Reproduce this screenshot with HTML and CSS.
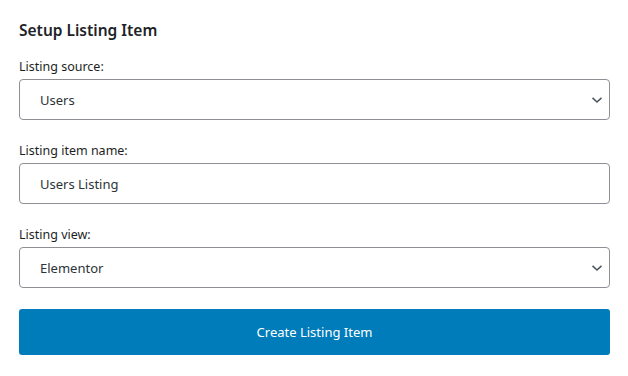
FILE: index.html
```html
<!DOCTYPE html>
<html lang="en">
<head>
    <meta charset="UTF-8">
    <meta name="viewport" content="width=device-width, initial-scale=1.0">
    <title>Setup Listing Item</title>
    <link rel="stylesheet" href="styles.css">
</head>
<body>
    <div class="setup-panel">
        <h2>Setup Listing Item</h2>
        <div class="form-group">
            <label for="listing-source">Listing source:</label>
            <div class="select-wrap">
                <select id="listing-source">
                    <option value="users">Users</option>
                    <option value="posts">Posts</option>
                </select>
                <svg class="chevron" width="12" height="8" viewBox="0 0 12 8"><polyline points="1.5,1.8 6,6 10.5,1.8" fill="none" stroke="#50575e" stroke-width="1.6"/></svg>
            </div>
        </div>
        <div class="form-group">
            <label for="listing-name">Listing item name:</label>
            <input type="text" id="listing-name" value="Users Listing">
        </div>
        <div class="form-group">
            <label for="listing-view">Listing view:</label>
            <div class="select-wrap">
                <select id="listing-view">
                    <option value="elementor">Elementor</option>
                    <option value="blocks">Blocks</option>
                </select>
                <svg class="chevron" width="12" height="8" viewBox="0 0 12 8"><polyline points="1.5,1.8 6,6 10.5,1.8" fill="none" stroke="#50575e" stroke-width="1.6"/></svg>
            </div>
        </div>
        <button class="create-button">Create Listing Item</button>
    </div>
</body>
</html>
```

FILE: styles.css
```css
body {
    margin: 0;
    font-family: "Noto Sans", "Open Sans", Arial, sans-serif;
    background-color: #fff;
    color: #1e1e1e;
}
.setup-panel {
    padding: 20px 18px 0 19px;
}
.setup-panel h2 {
    margin: 0 0 18px;
    font-size: 15.5px;
    line-height: 20px;
    font-weight: 600;
    color: #1d2327;
}
.form-group {
    margin-bottom: 22px;
}
.form-group label {
    display: block;
    margin-bottom: 3px;
    font-size: 12.5px;
    line-height: 18px;
    color: #1e1e1e;
}
.form-group input, .form-group select {
    display: block;
    width: 100%;
    height: 41px;
    padding: 0 20px;
    box-sizing: border-box;
    border: 1px solid #8c8f94;
    border-radius: 4px;
    background-color: #fff;
    font-family: inherit;
    font-size: 13px;
    color: #2c3338;
    appearance: none;
    outline: none;
}
.select-wrap {
    position: relative;
}
.chevron {
    position: absolute;
    right: 7px;
    top: 17px;
    pointer-events: none;
}
.create-button {
    display: block;
    width: 100%;
    height: 46px;
    margin-top: -1px;
    border: none;
    border-radius: 3px;
    background-color: #007cba;
    color: #fff;
    font-family: inherit;
    font-size: 13px;
}
```
